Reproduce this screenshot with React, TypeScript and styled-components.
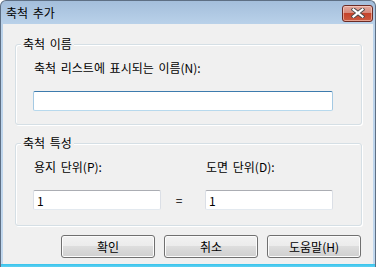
import styled, { createGlobalStyle } from "styled-components";

const GlobalStyle = createGlobalStyle`
  html, body {
    margin: 0;
    padding: 0;
    background: #ffffff;
  }
  body {
    font-family: "Noto Sans CJK KR", "Liberation Sans", sans-serif;
    font-size: 12px;
    word-spacing: 2px;
    color: #000;
  }
`;

const Window = styled.div`
  width: 376px;
  height: 267px;
  box-sizing: border-box;
  display: flex;
  flex-direction: column;
  border-radius: 6px 6px 0 0;
  border: 1px solid #5e6f84;
  border-bottom: none;
  background: linear-gradient(#a4bedb, #bad2ea 24px, #c2d8ee);
  overflow: hidden;
`;

const TitleBar = styled.div`
  height: 23px;
  display: flex;
  align-items: center;
  justify-content: space-between;
  padding: 0 2px 0 5px;
`;

const Title = styled.span`
  font-size: 12px;
  line-height: 14px;
  margin-top: 1px;
  color: #000;
`;

const CloseButton = styled.button`
  width: 31px;
  height: 17px;
  margin-top: 1px;
  padding: 0;
  border: 1px solid #6b2b25;
  border-radius: 3px;
  background: linear-gradient(#e4a89c, #d68a7c 45%, #c5432b 50%, #cc5a3f);
  box-shadow: inset 0 0 0 1px rgba(255, 220, 210, 0.55);
  display: flex;
  align-items: center;
  justify-content: center;
`;

const Client = styled.div`
  flex: 1;
  margin: 0 2px;
  background: #f0f0f0;
  padding: 20px 11px 0 12px;
  display: flex;
  flex-direction: column;
`;

const BottomEdge = styled.div`
  height: 3px;
  background: linear-gradient(#37c3ec, #5fd1f2);
`;

const Group = styled.div<{ $bottom: number }>`
  position: relative;
  border: 1px solid #d5dfe5;
  border-radius: 3px;
  box-shadow: inset 1px 1px 0 #ffffff, 1px 1px 0 #ffffff;
  padding: 16px 0 ${(p) => p.$bottom}px 17px;
  margin-bottom: 18px;
`;

const Legend = styled.span`
  position: absolute;
  top: -8px;
  left: 5px;
  padding: 0 2px;
  background: #f0f0f0;
  line-height: 14px;
`;

const Fields = styled.div`
  display: grid;
  grid-template-columns: 128px 44px 128px;
  row-gap: 16px;
  align-items: center;
`;

const Label = styled.span<{ $col?: number; $span?: boolean }>`
  grid-column: ${(p) => (p.$span ? "1 / 4" : p.$col ?? 1)};
  line-height: 14px;
  padding-left: 1px;
  white-space: nowrap;
`;

const TextBox = styled.input<{ $hot?: boolean; $span?: boolean }>`
  grid-column: ${(p) => (p.$span ? "1 / 4" : "auto")};
  box-sizing: border-box;
  height: 20px;
  width: 100%;
  margin: 0;
  padding: 0 3px;
  font: inherit;
  font-size: 12px;
  color: #000;
  background: #fff;
  outline: none;
  border: 1px solid ${(p) => (p.$hot ? "#a4c9e3" : "#dbdfe6")};
  border-top-color: ${(p) => (p.$hot ? "#3d7bad" : "#abadb3")};
  border-bottom-color: ${(p) => (p.$hot ? "#b7d9ed" : "#e3e9ef")};
  border-radius: 2px;
`;

const Equals = styled.span`
  text-align: center;
  padding-right: 8px;
  line-height: 14px;
`;

const ButtonRow = styled.div`
  display: flex;
  justify-content: flex-end;
  gap: 9px;
  margin-top: -9px;
  padding-right: 1px;
`;

const Button = styled.button`
  width: 94px;
  height: 23px;
  padding: 0;
  font: inherit;
  font-size: 12px;
  color: #000;
  border: 1px solid #707070;
  border-radius: 3px;
  background: linear-gradient(#f2f2f2, #ebebeb 50%, #dddddd 50%, #cfcfcf);
  box-shadow: inset 0 0 0 1px #fcfcfc;
`;

function CloseGlyph() {
  return (
    <svg width="14" height="10" viewBox="0 0 14 10">
      <path
        d="M2.5 1.5 L11.5 8.5 M11.5 1.5 L2.5 8.5"
        stroke="#4a4a4a"
        strokeWidth="4"
        strokeLinecap="square"
      />
      <path
        d="M2.5 1.5 L11.5 8.5 M11.5 1.5 L2.5 8.5"
        stroke="#ffffff"
        strokeWidth="2.2"
        strokeLinecap="square"
      />
    </svg>
  );
}

export default function App() {
  return (
    <>
      <GlobalStyle />
      <Window>
        <TitleBar>
          <Title>축척 추가</Title>
          <CloseButton aria-label="닫기">
            <CloseGlyph />
          </CloseButton>
        </TitleBar>
        <Client>
          <Group $bottom={13}>
            <Legend>축척 이름</Legend>
            <Fields>
              <Label $span>축척 리스트에 표시되는 이름(N):</Label>
              <TextBox $hot $span defaultValue="" />
            </Fields>
          </Group>
          <Group $bottom={15}>
            <Legend>축척 특성</Legend>
            <Fields>
              <Label>용지 단위(P):</Label>
              <Label $col={3}>도면 단위(D):</Label>
              <TextBox defaultValue="1" />
              <Equals>=</Equals>
              <TextBox defaultValue="1" />
            </Fields>
          </Group>
          <ButtonRow>
            <Button>확인</Button>
            <Button>취소</Button>
            <Button>도움말(H)</Button>
          </ButtonRow>
        </Client>
        <BottomEdge />
      </Window>
    </>
  );
}
